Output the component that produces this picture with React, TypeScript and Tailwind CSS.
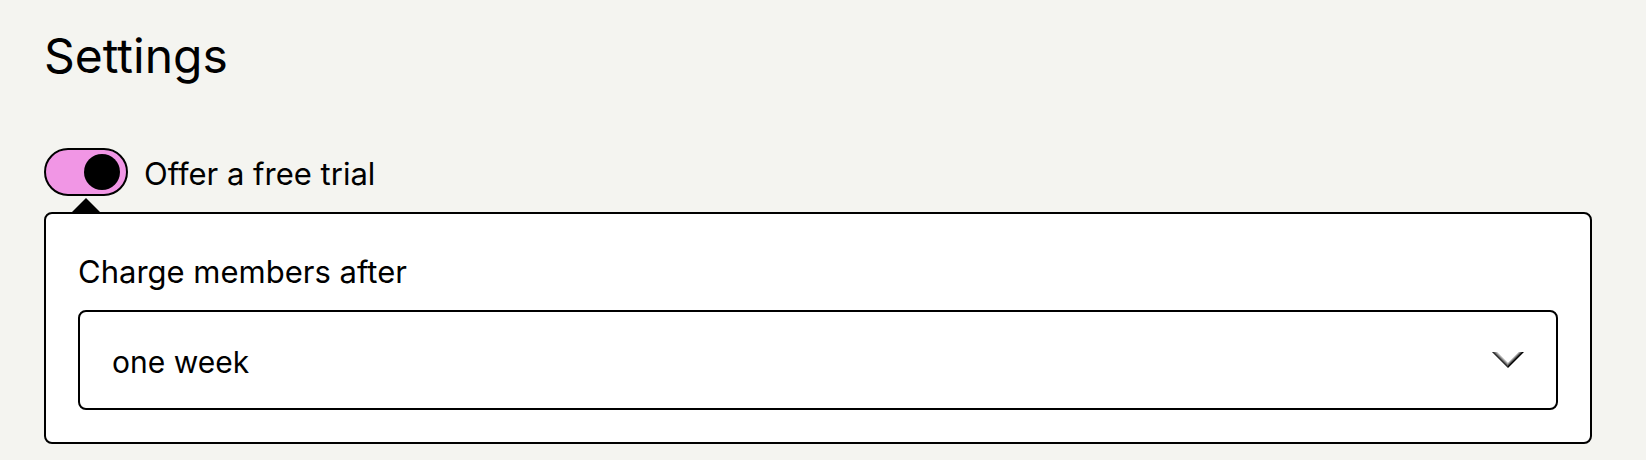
export default function App() {
  return (
    <main className="min-h-screen bg-[#f4f4f0] px-11 pt-8 pb-4 font-['Inter',sans-serif] text-black">
      <h1 className="text-[48px] leading-[48px]">Settings</h1>
      <section className="mt-[68px]">
        <div className="flex items-center gap-4">
          <input
            id="trial"
            type="checkbox"
            role="switch"
            defaultChecked
            className="flex h-12 w-[84px] shrink-0 appearance-none items-center rounded-full border-2 border-black bg-white px-[6px] before:block before:size-9 before:rounded-full before:bg-black before:content-[''] checked:justify-end checked:bg-[#f196e5]"
          />
          <label htmlFor="trial" className="pt-1 text-[31px] leading-[44px]">Offer a free trial</label>
        </div>
        <svg viewBox="0 0 28 14" className="mt-[2px] ml-7 block h-[14px] w-7" aria-hidden="true">
          <path d="M14 0 28 14H0Z" />
        </svg>
        <div className="mr-[10px] rounded-lg border-2 border-black bg-white p-8">
          <label htmlFor="period" className="block pt-1 text-[31px] leading-[44px]">Charge members after</label>
          <div className="relative mt-4">
            <select id="period" className="block h-[100px] w-full appearance-none rounded-lg border-2 border-black bg-white px-8 pt-1 text-[30px]">
              <option>one week</option>
              <option>one month</option>
            </select>
            <svg viewBox="0 0 32 16" className="pointer-events-none absolute top-[42px] right-[34px] h-4 w-8" aria-hidden="true">
              <defs>
                <linearGradient id="left" gradientUnits="userSpaceOnUse" x1="8" y1="8" x2="11" y2="5">
                  <stop stopColor="#000" />
                  <stop offset="1" stopColor="#000" stopOpacity="0" />
                </linearGradient>
                <linearGradient id="right" gradientUnits="userSpaceOnUse" x1="24" y1="8" x2="21" y2="5">
                  <stop stopColor="#000" />
                  <stop offset="0.2" stopColor="#000" />
                  <stop offset="1" stopColor="#000" stopOpacity="0" />
                </linearGradient>
              </defs>
              <path d="M0 0H16V16Z" fill="url(#left)" />
              <path d="M32 0H16V16Z" fill="url(#right)" />
            </svg>
          </div>
        </div>
      </section>
    </main>
  );
}
